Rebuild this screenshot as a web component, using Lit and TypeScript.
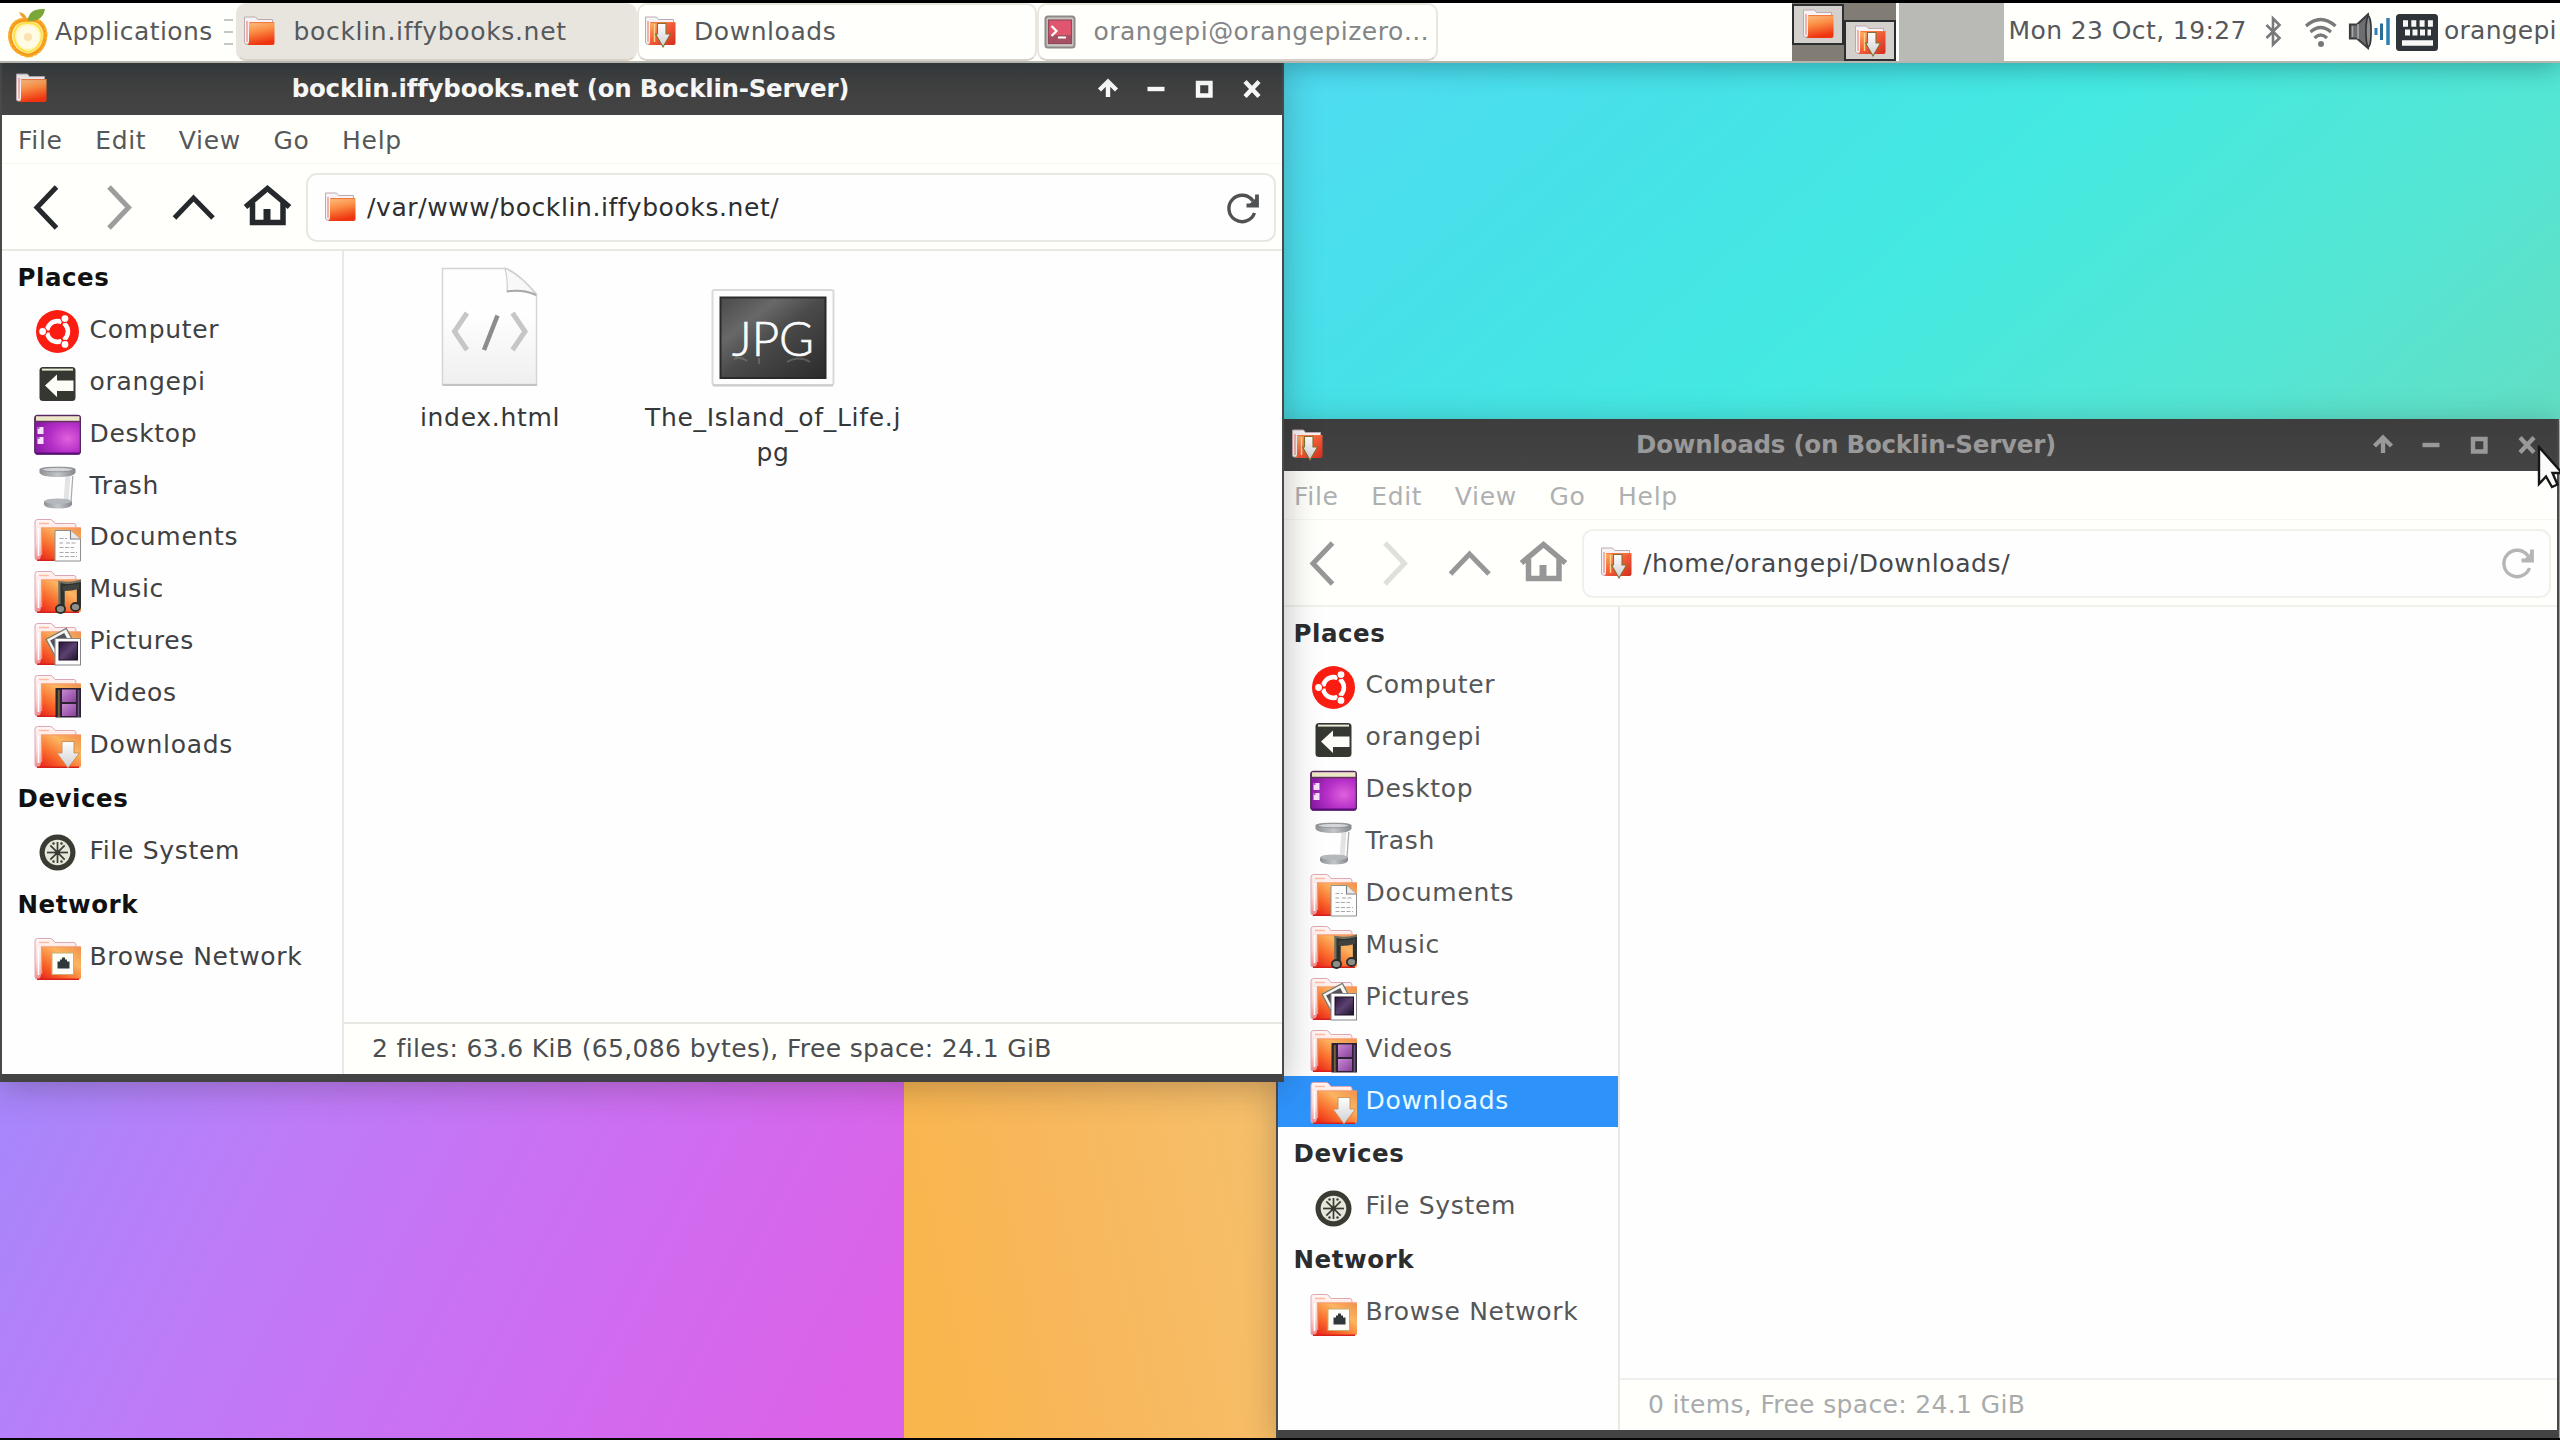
import { LitElement, html, svg, css, nothing } from "lit";
import { customElement, property } from "lit/decorators.js";
import { classMap } from "lit/directives/class-map.js";

const folderDefs = svg`
  <defs>
    <linearGradient id="front" x1="1" y1="0" x2="0.1" y2="1">
      <stop offset="0" stop-color="#ef8f4c"></stop>
      <stop offset="0.35" stop-color="#fbb560"></stop>
      <stop offset="0.7" stop-color="#f9682a"></stop>
      <stop offset="1" stop-color="#e8261a"></stop>
    </linearGradient>
    <linearGradient id="back" x1="0" y1="0" x2="0" y2="1">
      <stop offset="0" stop-color="#fff6f4"></stop>
      <stop offset="0.6" stop-color="#fbd3cf"></stop>
      <stop offset="1" stop-color="#f08a90"></stop>
    </linearGradient>
    <linearGradient id="tile" x1="0" y1="0" x2="0.25" y2="1">
      <stop offset="0" stop-color="#fcc08a"></stop>
      <stop offset="0.45" stop-color="#fb8f44"></stop>
      <stop offset="1" stop-color="#ee3410"></stop>
    </linearGradient>
    <linearGradient id="tilehot" x1="0" y1="0" x2="1" y2="1">
      <stop offset="0" stop-color="#fbc070"></stop>
      <stop offset="0.45" stop-color="#f4603a"></stop>
      <stop offset="1" stop-color="#d42c1c"></stop>
    </linearGradient>
    <linearGradient id="silver" x1="0" y1="0" x2="0" y2="1">
      <stop offset="0" stop-color="#ffffff"></stop>
      <stop offset="1" stop-color="#cfcfd4"></stop>
    </linearGradient>
    <radialGradient id="violet" cx="0.72" cy="0.6" r="0.75">
      <stop offset="0" stop-color="#df62dc"></stop>
      <stop offset="0.5" stop-color="#b62fc8"></stop>
      <stop offset="1" stop-color="#8a1aa6"></stop>
    </radialGradient>
    <linearGradient id="photo" x1="0" y1="0" x2="1" y2="1">
      <stop offset="0" stop-color="#2b1638"></stop>
      <stop offset="0.5" stop-color="#5b4170"></stop>
      <stop offset="1" stop-color="#1d1228"></stop>
    </linearGradient>
    <linearGradient id="film" x1="0" y1="0" x2="1" y2="1">
      <stop offset="0" stop-color="#c78bd0"></stop>
      <stop offset="1" stop-color="#8b3f9e"></stop>
    </linearGradient>
    <linearGradient id="metal" x1="0" y1="0" x2="1" y2="0">
      <stop offset="0" stop-color="#8d9094"></stop>
      <stop offset="0.5" stop-color="#c3c6c9"></stop>
      <stop offset="1" stop-color="#85888c"></stop>
    </linearGradient>
  </defs>`;

const folderBase = svg`
  <path d="M1 4Q1 1.5 3.5 1.5H16Q18 1.5 19 3L21 5.5H40Q42 5.5 42 8V12H46V40Q46 42 44 42H3Q1 42 1 40Z" fill="url(#back)" stroke="#dda7b4" stroke-width="1"></path>
  <path d="M5 5.5H15" stroke="#fbb9a0" stroke-width="1.4"></path>
  <path d="M4.500 38V10" stroke="#fff" stroke-width="1.6"></path>
  <path d="M7 9.500H47V40Q47 42.500 44.500 42.500H4Q7 41 7 37Z" fill="url(#front)"></path>
  <path d="M7.600 37V10H46.500" fill="none" stroke="#f79a70" stroke-width="1.2"></path>
  <path d="M3 42.200H45" stroke="#d8201c" stroke-width="1.6"></path>`;

const placeIcons: Record<string, unknown> = {
  computer: svg`
    <circle cx="23.500" cy="21.500" r="21.500" fill="#fb1d12"></circle>
    <circle cx="23.500" cy="21.500" r="10.400" fill="none" stroke="#fff" stroke-width="4.600"></circle>
    <g stroke="#fb1d12" stroke-width="2">
      <path d="M23.500 21.500L6 21.500"></path><path d="M23.500 21.500L32.300 6.300"></path><path d="M23.500 21.500L32.300 36.700"></path>
    </g>
    <circle cx="23.500" cy="21.500" r="7.800" fill="#fb1d12"></circle>
    <g fill="#fff" stroke="#fb1d12" stroke-width="1.200">
      <circle cx="8.600" cy="21.500" r="4"></circle><circle cx="31" cy="8.600" r="4"></circle><circle cx="31" cy="34.400" r="4"></circle>
    </g>`,
  home: svg`
    <rect x="5.500" y="5" width="36" height="34" rx="3.500" fill="#353830"></rect>
    <path d="M8 7.600H39" stroke="#e9ecd8" stroke-width="2"></path>
    <path d="M11 23.500L23 12.500V18.500H39.500V29H23V35Z" fill="#fbfdf6"></path>`,
  desktop: svg`
    <rect x="0.800" y="1.500" width="45.600" height="38.500" rx="2.500" fill="url(#violet)" stroke="#55285f" stroke-width="1.400"></rect>
    <path d="M2 2.200H45.400V6.800H2Z" fill="#ebe8c6"></path><path d="M1.500 7.600H46" stroke="#5b3a4e" stroke-width="1.200"></path>
    <path d="M2 39.500H45.500" stroke="#5a0f78" stroke-width="1.800"></path>
    <g fill="#f5e2fa"><rect x="3.500" y="13" width="6" height="7"></rect><rect x="3.500" y="23" width="6" height="7"></rect></g>
    <g fill="#b84ccc"><rect x="3.500" y="13" width="2" height="2"></rect><rect x="3.500" y="23" width="2" height="2"></rect></g>`,
  trash: svg`
    <path d="M34 9L32 37" stroke="#e2e3e5" stroke-width="5"></path>
    <path d="M38.800 10L36.800 38" stroke="#a9acb0" stroke-width="1.300"></path>
    <path d="M10 36Q10 33 24 33Q38 33 38 36V38.500Q37 42.500 24 42.500Q11 42.500 10 38.500Z" fill="url(#metal)"></path>
    <ellipse cx="24" cy="35.300" rx="13.500" ry="2.800" fill="#b4b7bb"></ellipse>
    <path d="M5.500 3.500Q6 0.500 23.500 0.500Q41 0.500 41.500 3.500V6.500Q40 11 23.500 11Q7 11 5.500 6.500Z" fill="url(#metal)"></path>
    <ellipse cx="23.500" cy="3.600" rx="15.500" ry="2.200" fill="#d3d5d8" stroke="#85888c" stroke-width="0.800"></ellipse>`,
  documents: svg`${folderBase}
    <path d="M21 12.500H36.500L46.500 21V43H21Z" fill="#fdfdfd" stroke="#8f8f8c" stroke-width="1"></path>
    <path d="M36.500 12.500V21H46.500" fill="#e9e9ec" stroke="#7d7d80" stroke-width="1.100"></path>
    <g stroke="#a9a9b0" stroke-width="1.100" stroke-dasharray="4 1.500">
      <path d="M25.500 20.500H33"></path><path d="M25.500 25H29"></path><path d="M32 25H42"></path><path d="M25.500 29.500H40"></path><path d="M25.500 34.500H43"></path><path d="M25.500 38.500H43"></path>
    </g>`,
  music: svg`${folderBase}
    <path d="M27.500 38V14.500Q36 16 46 13V36" fill="none" stroke="#6f7060" stroke-width="6.500"></path>
    <path d="M28.500 38V15.500Q36 17 45 14.500V36" fill="none" stroke="#2f312e" stroke-width="4"></path>
    <path d="M28.500 16V21Q36 21.500 45 19V14Z" fill="#3f423f"></path>
    <ellipse cx="26.500" cy="39" rx="4.600" ry="4" fill="#8c8f8c" stroke="#2b2d2a" stroke-width="1.800"></ellipse>
    <ellipse cx="41.500" cy="37" rx="4.600" ry="4" fill="#8c8f8c" stroke="#2b2d2a" stroke-width="1.800"></ellipse>`,
  pictures: svg`${folderBase}
    <g transform="rotate(-28 26 20)"><rect x="15" y="11" width="23" height="22" fill="#f5f5f2" stroke="#77786c" stroke-width="1.200"></rect><rect x="18" y="14" width="16" height="15" fill="#56525c"></rect></g>
    <rect x="21" y="16.500" width="25.500" height="26.500" fill="#fdfdfd" stroke="#85858a" stroke-width="1"></rect>
    <rect x="25" y="20" width="18.500" height="18" fill="url(#photo)" stroke="#1b1024" stroke-width="1"></rect>`,
  videos: svg`${folderBase}
    <rect x="21.500" y="14" width="25.500" height="29.500" fill="#2c2130"></rect>
    <rect x="28" y="15.500" width="14" height="12.500" fill="url(#film)"></rect><rect x="28" y="30" width="14" height="12" fill="url(#film)"></rect>
    <path d="M24.800 16V43" stroke="#6f6238" stroke-width="2"></path><path d="M44.500 16V43" stroke="#6d5480" stroke-width="1.600"></path>`,
  downloads: svg`${folderBase}
    <path d="M28 16.500H40V28H45.500L34 43L23 28H28Z" fill="url(#silver)" stroke="#c98b52" stroke-width="0.900"></path>`,
  disk: svg`
    <circle cx="23.500" cy="21.500" r="18" fill="#3a3c34"></circle>
    <circle cx="23.500" cy="21.500" r="12.800" fill="#e6e6da"></circle>
    <g stroke="#3a3c34" stroke-width="1.700"><path d="M23.500 11V32"></path><path d="M13 21.500H34"></path><path d="M16.300 14.300L30.700 28.700"></path><path d="M30.700 14.300L16.300 28.700"></path></g>
    <g fill="#3a3c34"><circle cx="19.500" cy="12.500" r="1.200"></circle><circle cx="27.500" cy="12.500" r="1.200"></circle><circle cx="19.500" cy="30.500" r="1.200"></circle><circle cx="27.500" cy="30.500" r="1.200"></circle></g>
    <circle cx="23.500" cy="21.500" r="2.600" fill="#3a3c34"></circle>`,
  network: svg`${folderBase}
    <rect x="18" y="16" width="21.500" height="21.500" fill="#fdfdfa" stroke="#c9b070" stroke-width="1"></rect>
    <path d="M23.500 31.500V24.500H26V22.500H28V20.500H31V22.500H33V24.500H35.500V31.500Z" fill="#31383a"></path>`,
};

const tileIcon = (kind: string, cls = "tile") => html`
  <svg class=${cls} viewBox="0 0 32 32">
    ${folderDefs}
    <path d="M1 1H12L14 3.500H29V28H2.500Q1 28 1 26Z" fill="#f7f3f4" stroke="#bcaab2" stroke-width="1"></path>
    <path d="M3.500 5V26" stroke="#f0a098" stroke-width="1.600"></path>
    <path d="M5.500 6H31V27Q31 29 29 29H3.500Q5.500 28 5.500 25Z" fill=${kind === "downloads" ? "url(#tilehot)" : "url(#tile)"}></path>
    <path d="M6 6.600H30.500" stroke="#f4733c" stroke-width="1"></path>
    ${kind === "downloads"
      ? svg`<path d="M10 8V26" stroke="#fbd58a" stroke-width="1.500"></path><path d="M13 7.500H21.500V18H26L18.500 31L11 18H13Z" fill="url(#silver)" stroke="#85702f" stroke-width="1.100"></path>`
      : nothing}
  </svg>`;

interface FileEntry { name: string; kind: "html" | "jpg"; }

@customElement("places-pane")
class PlacesPane extends LitElement {
  @property() selected = "";

  static styles = css`
    :host { display: flex; flex-direction: column; width: 340px; flex: none; background: #fefefe; border-right: 2px solid #e9e8e5; box-sizing: content-box; }
    .head { height: 53.900px; line-height: 53.900px; padding-left: 15.500px; font-weight: bold; font-size: 24.500px; letter-spacing: 0.550px; color: var(--head); }
    .item { height: 51.900px; display: flex; align-items: center; padding-left: 32px; gap: 8.500px; color: var(--item); letter-spacing: 0.680px; }
    .item.on { background: #2d93fb; color: #e9fbff; }
    .icon { width: 47px; height: 44px; flex: none; padding-top: 3px; }
    .label { line-height: 50.500px; padding-bottom: 1.400px; white-space: nowrap; }
  `;

  private item(icon: string, label: string) {
    return html`<div class=${classMap({ item: true, on: this.selected === label })}>
      <svg class="icon" viewBox="0 0 47 44">${folderDefs}${placeIcons[icon]}</svg>
      <span class="label">${label}</span>
    </div>`;
  }

  render() {
    return html`
      <div class="head">Places</div>
      ${this.item("computer", "Computer")}
      ${this.item("home", "orangepi")}
      ${this.item("desktop", "Desktop")}
      ${this.item("trash", "Trash")}
      ${this.item("documents", "Documents")}
      ${this.item("music", "Music")}
      ${this.item("pictures", "Pictures")}
      ${this.item("videos", "Videos")}
      ${this.item("downloads", "Downloads")}
      <div class="head">Devices</div>
      ${this.item("disk", "File System")}
      <div class="head">Network</div>
      ${this.item("network", "Browse Network")}
    `;
  }
}

@customElement("file-window")
class FileWindow extends LitElement {
  @property() heading = "";
  @property() path = "";
  @property() status = "";
  @property() kind = "folder";
  @property() selected = "";
  @property({ type: Boolean, reflect: true }) inactive = false;
  @property({ attribute: false }) files: FileEntry[] = [];

  static styles = css`
    :host {
      --chrome: #fffffc; --menu: #55575a; --item: #3f4143; --head: #111; --title: #fafafa; --tool: #25292b; --dim: #9c9e9e; --status: #4b4d50; --line: #e8e8e3; --path: #2c2e30; --reload: #4f5152;
      display: flex; flex-direction: column; box-sizing: border-box; background: #fefefe;
      border-left: 2px solid #48494a; border-right: 2px solid #48494a; border-bottom: 8px solid #434343;
    }
    :host([inactive]) {
      --menu: #aeb0b2; --item: #545658; --head: #2b2c2e; --title: #999; --tool: #979797; --dim: #dfdfdb; --status: #a9abad; --line: #f0f0ec; --path: #45474a; --reload: #b5b5b5;
    }
    .titlebar { height: 52px; flex: none; background: linear-gradient(#3d3d3d, #444); display: grid; grid-template-columns: 46px 1fr 198px; align-items: center; box-sizing: border-box; padding-left: 13px; }
    .tile { width: 33px; height: 32px; display: block; flex: none; }
    .title { text-align: center; font-weight: bold; font-size: 24.500px; letter-spacing: -0.230px; color: var(--title); white-space: nowrap; line-height: 52px; padding-right: 4px; }
    .buttons { display: flex; }
    .buttons svg { width: 48px; height: 52px; fill: none; stroke: var(--title); stroke-width: 4.400; }
    .menubar { height: 49px; flex: none; background: var(--chrome); display: flex; gap: 32.500px; padding-left: 16px; line-height: 51px; color: var(--menu); border-bottom: 1px solid #f7f7f2; box-sizing: border-box; letter-spacing: 0.700px; }
    .toolbar { height: 87px; flex: none; box-sizing: border-box; background: var(--chrome); border-bottom: 2px solid var(--line); display: flex; padding: 9px 6px 7px 24px; align-items: stretch; }
    .tools { width: 280px; flex: none; height: 69px; display: block; fill: none; stroke: var(--tool); stroke-width: 5; }
    .dim { stroke: var(--dim); }
    .entry { flex: 1; height: 69px; box-sizing: border-box; border: 2px solid var(--line); border-radius: 11px; background: #fefefe; display: flex; align-items: center; padding: 0 14px 0 16px; }
    .path { margin-left: 10px; flex: 1; color: var(--path); white-space: nowrap; letter-spacing: 0.580px; }
    .reload { width: 36px; height: 36px; fill: none; stroke: var(--reload); stroke-width: 3.400; }
    .tip { fill: var(--reload); stroke: none; }
    .body { flex: 1; display: flex; min-height: 0; }
    .main { flex: 1; display: flex; flex-direction: column; }
    .files { flex: 1; display: flex; align-items: flex-start; padding: 16px 0 0 6px; gap: 3px; }
    .file { width: 280px; display: flex; flex-direction: column; align-items: center; color: #353739; }
    .thumb { width: 124px; height: 120px; display: block; }
    .name { margin-top: 13px; width: 266px; text-align: center; line-height: 35px; word-break: break-all; letter-spacing: 0.680px; }
    .jpg { font: 300 47px Lato, "Open Sans", sans-serif; letter-spacing: 0; }
    .status { height: 52px; box-sizing: border-box; border-top: 2px solid var(--line); background: var(--chrome); line-height: 50px; padding-left: 28px; color: var(--status); letter-spacing: 0.350px; }
  `;

  private thumb(kind: string) {
    return kind === "html"
      ? html`<svg class="thumb" viewBox="0 0 124 120">
          <defs><linearGradient id="page" x1="0" y1="0" x2="0" y2="1"><stop offset="0.400" stop-color="#fefefe"></stop><stop offset="1" stop-color="#efefef"></stop></linearGradient></defs>
          <path d="M14.500 1.500H78Q90 6 108.500 27V117.500H14.500Z" fill="url(#page)" stroke="#d4d4d4" stroke-width="1.400"></path>
          <path d="M14.500 118H109" stroke="#c3c3c3" stroke-width="2"></path>
          <path d="M77 1.500Q80 12 79 24.500Q97 21 108.500 28Q92 7 77 1.500Z" fill="#f8f8f8" stroke="#cfcfcf" stroke-width="1.200"></path>
          <path d="M79 24.500Q94 22 108 28" fill="none" stroke="#a9a9a9" stroke-width="2"></path>
          <path d="M39 46L26.500 64.500L39 83" fill="none" stroke="#c6c6c6" stroke-width="5"></path>
          <path d="M84.500 46L97 64.500L84.500 83" fill="none" stroke="#c6c6c6" stroke-width="5"></path>
          <path d="M69.500 48.500L56 83" fill="none" stroke="#8c8c8c" stroke-width="4.500"></path>
        </svg>`
      : html`<svg class="thumb" viewBox="0 0 124 120">
          <defs>
            <linearGradient id="plate" x1="0" y1="0" x2="1" y2="1"><stop offset="0" stop-color="#4a4a4a"></stop><stop offset="0.280" stop-color="#686868"></stop><stop offset="0.500" stop-color="#4a4a4a"></stop><stop offset="1" stop-color="#2b2b2b"></stop></linearGradient>
          </defs>
          <rect x="1.500" y="23" width="121" height="95" rx="2" fill="#fdfdfd" stroke="#dadada" stroke-width="2"></rect>
          <path d="M2 118.500H122" stroke="#cccccc" stroke-width="2"></path>
          <rect x="9.500" y="30.500" width="105" height="80.500" fill="url(#plate)" stroke="#2a2a2a" stroke-width="2"></rect>
          <text class="jpg" x="21" y="88.500" fill="#fbfbfb" stroke="#fbfbfb" stroke-width="0.700" textLength="82" lengthAdjust="spacingAndGlyphs">JPG</text>
          <path d="M23 92Q30 89 36 94M48 91V97M76 95Q88 88 99 95" stroke="#8a8a8a" stroke-width="2" fill="none" opacity="0.450"></path>
        </svg>`;
  }

  render() {
    return html`
      <div class="titlebar">
        ${tileIcon(this.kind)}
        <div class="title">${this.heading}</div>
        <div class="buttons">
          <svg viewBox="0 0 48 52"><path d="M24 34V20M15.500 27L24 18.500L32.500 27"></path></svg>
          <svg viewBox="0 0 48 52"><path d="M15.500 26H32.500"></path></svg>
          <svg viewBox="0 0 48 52"><path d="M18 20H30.500V32.500H18Z"></path></svg>
          <svg viewBox="0 0 48 52"><path d="M17 18.500L31 33.500M31 18.500L17 33.500"></path></svg>
        </div>
      </div>
      <div class="menubar"><span>File</span><span>Edit</span><span>View</span><span>Go</span><span>Help</span></div>
      <div class="toolbar">
        <svg class="tools" viewBox="0 0 280 69">
          <path d="M30.500 14L11 34.500L30.500 55"></path>
          <path class="dim" d="M83 14L102.500 34.500L83 55"></path>
          <path d="M148.500 45L167.500 25L187 45"></path>
          <path d="M219.500 34L241.500 15.500L263.500 34" stroke-width="5.500"></path>
          <path d="M226.500 30V49.500H257V30" stroke-width="5.500"></path>
          <path d="M241 36V49" stroke-width="7"></path>
        </svg>
        <div class="entry">
          ${tileIcon(this.kind)}
          <span class="path">${this.path}</span>
          <svg class="reload" viewBox="0 0 36 36"><path d="M30.500 23A13.200 13.200 0 1 1 29 11"></path><path d="M33 4.500V15.500H22.500" stroke-width="3.800"></path><path class="tip" d="M25 14.500L32 8V15Z"></path></svg>
        </div>
      </div>
      <div class="body">
        <places-pane .selected=${this.selected}></places-pane>
        <div class="main">
          <div class="files">
            ${this.files.map((f) => html`<div class="file">${this.thumb(f.kind)}<div class="name">${f.name}</div></div>`)}
          </div>
          <div class="status">${this.status}</div>
        </div>
      </div>`;
  }
}

@customElement("task-panel")
class TaskPanel extends LitElement {
  static styles = css`
    :host { display: flex; box-sizing: border-box; height: 63px; border-top: 3px solid #000; border-bottom: 2px solid #b6b5ae; background: #fffffc; color: #56585b; line-height: 56px; white-space: nowrap; overflow: hidden; }
    .apps { width: 236px; box-sizing: border-box; flex: none; display: flex; align-items: center; padding-left: 7px; }
    .orange { width: 42px; height: 52px; flex: none; }
    .apps-label { margin-left: 6px; letter-spacing: 0.420px; width: 163px; padding-bottom: 1px; }
    .grip { display: flex; flex-direction: column; gap: 9.500px; margin-left: 6px; }
    .grip i { width: 9px; height: 2.500px; background: #c6c6c2; }
    .task { width: 400.500px; box-sizing: border-box; flex: none; display: flex; align-items: center; border: 2px solid #e9e5df; border-bottom-color: #d6d2ca; border-radius: 10px; padding-left: 5px; padding-bottom: 1px; }
    .task.on { background: #e8e5de; letter-spacing: 0.680px; }
    .task.faded { color: #838587; letter-spacing: 0.480px; }
    .task span { margin-left: 17.500px; }
    .tile { width: 33px; height: 32px; flex: none; }
    .term { width: 32px; height: 34px; flex: none; }
    .pager { margin-left: 354.500px; width: 104px; flex: none; background: #817d74; display: grid; grid-template-columns: 52px 52px; }
    .mini { box-sizing: border-box; border: 2px solid #2c2f31; background: #d4d1cd; display: flex; align-items: center; justify-content: center; height: 41px; }
    .mini.a { margin-top: 1px; }
    .mini.b { margin-top: 17px; }
    .desk { width: 105px; margin-left: 3px; flex: none; background: #b9b9b5; }
    .clock { margin-left: 4.500px; width: 252px; flex: none; letter-spacing: 0.400px; }
    .tray { width: 182px; flex: none; height: 58px; margin-left: -1px; }
    .user { margin-left: 2.500px; letter-spacing: 0.250px; }
  `;

  render() {
    return html`
      <div class="apps">
        <svg class="orange" viewBox="0 0 42 52">
          <path d="M21 14Q36 12 38.500 28Q38 46 21 49.500Q4 46 3 30Q4 13 21 14Z" fill="#fff3b0" stroke="#f79a1c" stroke-width="3.800"></path>
          <path d="M21 12Q38 12 39.500 28Q39 48 21 51Q3 47 2 30Q3 12 21 12Z" fill="none" stroke="#fbb52a" stroke-width="1.800" stroke-dasharray="3 2"></path>
          <path d="M21 17Q33 16 35 29Q34 43 21 46Q8 43 7 30Q8 16 21 17Z" fill="none" stroke="#fbe14a" stroke-width="2"></path>
          <circle cx="21" cy="31" r="11.500" fill="#fffbe4"></circle><circle cx="21" cy="31" r="4" fill="#fbe2b0"></circle>
          <path d="M21 14Q22 2 38 3Q36 15 23 15Z" fill="#7aa63a"></path>
          <path d="M20 14Q19 7 12 6Q14 12 20 14Z" fill="#f0a030"></path>
        </svg>
        <span class="apps-label">Applications</span>
        <span class="grip"><i></i><i></i><i></i></span>
      </div>
      <div class="task on">${tileIcon("folder")}<span>bocklin.iffybooks.net</span></div>
      <div class="task">${tileIcon("downloads")}<span>Downloads</span></div>
      <div class="task faded">
        <svg class="term" viewBox="0 0 32 34"><rect x="1.500" y="1.500" width="29" height="31" rx="2.500" fill="#c9c7c4" stroke="#8d8a88" stroke-width="2"></rect><rect x="4.500" y="5" width="23" height="23.500" fill="#e0566e" stroke="#93495a" stroke-width="1.200"></rect><path d="M5 20H27V28H5Z" fill="#8e5060" opacity="0.700"></path><path d="M7.500 11L12.500 16L7.500 21M14 22.500H22" stroke="#fff" stroke-width="2.200" fill="none"></path></svg>
        <span>orangepi@orangepizero…</span>
      </div>
      <div class="pager">
        <div class="mini a">${tileIcon("folder")}</div>
        <div class="mini b">${tileIcon("downloads")}</div>
      </div>
      <div class="desk"></div>
      <div class="clock">Mon 23 Oct, 19:27</div>
      <svg class="tray" viewBox="0 0 182 58" fill="none">
        <path d="M6.500 22L19.500 35L13 41.500V15.500L19.500 22L6.500 35" stroke="#77797a" stroke-width="2.600"></path>
        <g stroke="#77797a" stroke-width="3.200"><path d="M46 23Q60.500 10 75.500 23"></path><path d="M50.500 29Q60.500 20 71 29"></path><path d="M54.500 35Q60.500 29 67 35"></path></g>
        <circle cx="61" cy="41" r="3" fill="#77797a"></circle>
        <path d="M90 21.500H97L108 11.500Q111 28 108 45L97 35.500H90Z" fill="#6c6e6f" stroke="#3c3e3f" stroke-width="2.200"></path>
        <path d="M92.500 23V34M98 21V36" stroke="#a9aaab" stroke-width="1.500"></path>
        <ellipse cx="108.500" cy="28.500" rx="2.600" ry="15" fill="#8d8f90" stroke="#333536" stroke-width="1.600"></ellipse>
        <path d="M116 25V32" stroke="#2f7fb0" stroke-width="3"></path><path d="M121.500 20.500V37" stroke="#2c6d98" stroke-width="3"></path><path d="M128 15V42" stroke="#2f7fb4" stroke-width="3.500"></path>
        <rect x="136" y="11" width="42" height="37" rx="3.500" fill="#2e3438"></rect>
        <path d="M143 20.500H173" stroke="#f7f7f5" stroke-width="6.500" stroke-dasharray="5 3.300"></path>
        <path d="M145 29.500H171" stroke="#f7f7f5" stroke-width="6" stroke-dasharray="5 2.500"></path>
        <path d="M142 40H173" stroke="#f7f7f5" stroke-width="5.500"></path>
      </svg>
      <div class="user">orangepi</div>`;
  }
}

@customElement("app-root")
class AppRoot extends LitElement {
  static styles = css`
    :host { display: block; position: relative; width: 2560px; height: 1440px; overflow: hidden; font-family: "DejaVu Sans", Verdana, sans-serif; font-size: 25px; letter-spacing: 0.550px; background: #fff; }
    .paper { display: block; width: 2560px; height: 1440px; position: absolute; inset: 0; }
    .panel { position: relative; z-index: 4; box-shadow: 0 4px 26px rgba(0, 40, 50, 0.350); }
    .win { position: absolute; }
    .one { left: 0; top: 63px; width: 1284px; height: 1019px; z-index: 3; box-shadow: 0 4px 34px rgba(40, 30, 30, 0.300); }
    .two { left: 1276px; top: 418.500px; width: 1283px; height: 1019px; z-index: 2; box-shadow: 0 4px 30px rgba(40, 30, 30, 0.260); }
    .cursor { position: absolute; left: 2537px; top: 445px; width: 23px; height: 44px; z-index: 5; }
    .base { position: absolute; left: 0; bottom: 0; width: 100%; height: 2px; background: #060606; z-index: 5; }
  `;

  render() {
    return html`
      <svg class="paper" viewBox="0 0 2560 1440" preserveAspectRatio="none">
        <defs>
          <linearGradient id="sea" gradientUnits="userSpaceOnUse" x1="1284" y1="80" x2="2000" y2="900">
            <stop offset="0" stop-color="#4fdcf2"></stop><stop offset="0.250" stop-color="#46e1e8"></stop><stop offset="0.500" stop-color="#44e9e1"></stop><stop offset="0.780" stop-color="#54e6d4"></stop><stop offset="1" stop-color="#62dec4"></stop>
          </linearGradient>
          <linearGradient id="grape" gradientUnits="userSpaceOnUse" x1="0" y1="1080" x2="800" y2="1500">
            <stop offset="0" stop-color="#a687fb"></stop><stop offset="0.300" stop-color="#bd7cf8"></stop><stop offset="0.700" stop-color="#cf6cf0"></stop><stop offset="1" stop-color="#dc62e8"></stop>
          </linearGradient>
          <linearGradient id="amber" gradientUnits="userSpaceOnUse" x1="903" y1="1260" x2="1277" y2="1180">
            <stop offset="0" stop-color="#f9b64d"></stop><stop offset="0.400" stop-color="#f8b75b"></stop><stop offset="1" stop-color="#f6bf6b"></stop>
          </linearGradient>
        </defs>
        <rect x="1200" y="0" width="1360" height="1440" fill="url(#sea)"></rect>
        <rect x="0" y="1000" width="904" height="440" fill="url(#grape)"></rect>
        <rect x="904" y="1000" width="400" height="440" fill="url(#amber)"></rect>
      </svg>
      <task-panel class="panel"></task-panel>
      <file-window class="win one"
        heading="bocklin.iffybooks.net (on Bocklin-Server)"
        path="/var/www/bocklin.iffybooks.net/"
        status="2 files: 63.6 KiB (65,086 bytes), Free space: 24.1 GiB"
        .files=${[{ name: "index.html", kind: "html" }, { name: "The_Island_of_Life.jpg", kind: "jpg" }]}></file-window>
      <file-window class="win two" inactive kind="downloads" selected="Downloads"
        heading="Downloads (on Bocklin-Server)"
        path="/home/orangepi/Downloads/"
        status="0 items, Free space: 24.1 GiB"></file-window>
      <svg class="cursor" viewBox="0 0 23 44"><path d="M2 2V39L9 31.500L15 42L20.500 39.500L15.500 28H25Z" fill="#fbfbfb" stroke="#161616" stroke-width="2.400"></path></svg>
      <div class="base"></div>`;
  }
}
